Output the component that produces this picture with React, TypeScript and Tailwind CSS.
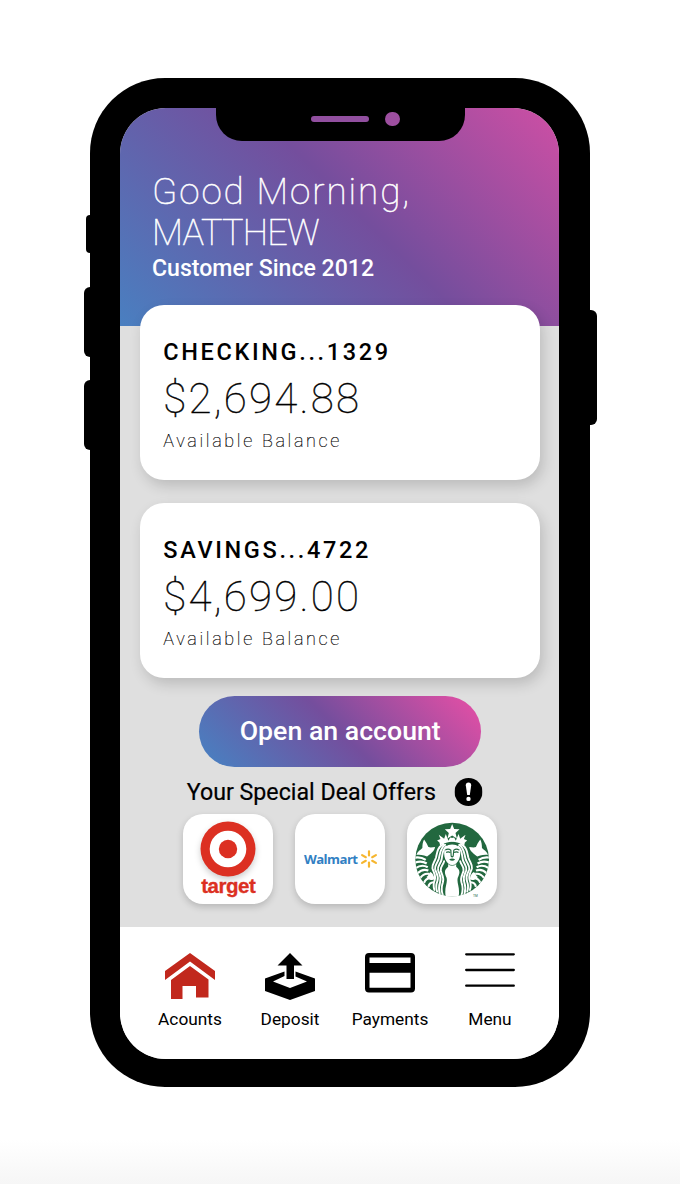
import type { ReactNode } from "react";

const half = (
  <g>
    {/* tail fin */}
    <path fill="#fff" d="M73 95 C79 103 83 110 86 118 C93 120 100 118 106 118 C104 131 92 138 82 146 C70 142 60 141 50 141 C54 131 62 127 68 121 C68 111 69 102 73 95Z" />
    {/* scales of the tail */}
    <g fill="none" stroke="#fff" strokeWidth="6.5">
      <path d="M42 150 Q62 145 78 156" />
      <path d="M44 165 Q65 157 81 167" />
      <path d="M48 181 Q66 168 84 178" />
      <path d="M54 196 Q68 181 86 188" />
      <path d="M62 210 Q72 195 88 198" />
      <path d="M73 225 Q78 210 94 211" />
      <path d="M86 237 Q88 224 102 223" />
    </g>
    <path fill="#fff" d="M92 192 C99 195 103 203 104 214 C98 219 88 216 80 207 C87 204 86 197 92 192Z" />
    {/* hair */}
    <g fill="none" stroke="#fff" strokeWidth="5.6" strokeLinecap="round">
      <path d="M131 109 C113 118 112 134 109 148 C104 164 96 170 98 181 C101 194 110 201 105 216 C100 229 100 235 104 246" />
      <path d="M136 111 C120 122 121 139 117 153 C112 168 104 173 106 184 C110 198 118 204 113 219 C108 232 107 238 112 251" />
      <path d="M139 116 C127 125 128 142 125 157 C120 171 112 175 115 187 C119 200 126 207 121 222 C116 236 116 243 120 257" />
      <path d="M133 160 C130 172 120 177 123 189 C127 202 134 208 129 224 C124 238 125 249 129 261" />
    </g>
    {/* crown points */}
    <path fill="#fff" d="M158 91 L151 89 L146 99 L138 79 L133 93 L117 81 L122 94 L112 98 L119 104 L121 113 Q139 102 158 102Z" />
  </g>
);

function Siren() {
  return (
    <svg viewBox="46 43 224 224" className="h-[75px] w-[75px]">
      <defs>
        <clipPath id="disc"><circle cx="157" cy="155" r="110" /></clipPath>
      </defs>
      <circle cx="157" cy="155" r="110" fill="#22683f" />
      <g clipPath="url(#disc)">
        {half}
        <g transform="translate(314 0) scale(-1 1)">{half}</g>
        <path fill="#fff" d="M157 110 C140 110 133 120 133 137 C133 150 138 160 145 167 L145 177 C131 188 135 197 140 209 C145 225 132 238 138 268 H176 C182 238 169 225 174 209 C179 197 183 188 169 177 L169 167 C176 160 181 150 181 137 C181 120 174 110 157 110Z" />
        <path fill="#fff" d="m157 49 6 15 16 1-12 11 4 16-14-9-14 9 4-16-12-11 16-1z" />
        <path fill="none" stroke="#22683f" strokeWidth="3.4" d="M136 127 Q145 121 153 127 L154 145 Q157 149 160 145 L162 127 Q170 121 178 127 M139 134 Q145 130 151 134 M163 134 Q170 130 176 134" />
        <path fill="#22683f" d="M148 155 Q157 149 166 155 Q157 163 148 155Z" />
        <path fill="none" stroke="#22683f" strokeWidth="2" d="M145 168 Q157 178 169 168" />
      </g>
      <text x="219" y="266" fontSize="10" fill="#22683f" fontFamily="Liberation Sans, sans-serif">TM</text>
    </svg>
  );
}

function Bullseye() {
  return (
    <svg viewBox="0 0 56 56" className="h-[56px] w-[56px] drop-shadow-[0_3px_3px_rgba(0,0,0,0.2)]">
      <circle cx="28" cy="28" r="27.5" fill="#dc3022" />
      <circle cx="28" cy="28" r="18.3" fill="#fff" />
      <circle cx="28" cy="28" r="9.2" fill="#dc3022" />
    </svg>
  );
}

function Spark() {
  return (
    <svg viewBox="-9 -9 18 18" className="h-[18px] w-[18px]">
      <g stroke="#f6b62f" strokeWidth="2.2" strokeLinecap="round">
        <path d="M0-3.6V-7.7M0 3.6V7.7M3.2-1.8 6.9-3.9M3.2 1.8 6.9 3.9M-3.2-1.8-6.9-3.9M-3.2 1.8-6.9 3.9" />
      </g>
    </svg>
  );
}

function Tile({ children }: { children: ReactNode }) {
  return (
    <div className="flex h-[90px] w-[90px] flex-col items-center justify-center overflow-hidden rounded-[20px] bg-white shadow-[0_3px_7px_rgba(0,0,0,0.18)]">
      {children}
    </div>
  );
}

function Account({ name, amount }: { name: string; amount: string }) {
  return (
    <section className="h-[175px] w-[400px] rounded-[24px] bg-white pl-[23px] pt-[31px] text-black shadow-[3px_6px_14px_rgba(0,0,0,0.16)]">
      <h2 className="whitespace-nowrap text-[23.5px] font-medium leading-[32px] tracking-[2.65px]">{name}</h2>
      <p className="mt-[8px] text-[42px] font-thin leading-[46px] tracking-[2.25px] [-webkit-text-stroke:0.4px_#000]">{amount}</p>
      <p className="mt-[7px] text-[18px] font-thin leading-[24px] tracking-[2.65px] [-webkit-text-stroke:0.2px_#000]">Available Balance</p>
    </section>
  );
}

function NavItem({ label, children }: { label: string; children: ReactNode }) {
  return (
    <a className="flex w-[100px] flex-col items-center">
      <svg viewBox="0 0 50 48" className="h-[48px] w-[50px]">{children}</svg>
      <span className="mt-[7px] text-[17.3px] leading-[22px] text-black">{label}</span>
    </a>
  );
}

export default function App() {
  return (
    <main className="flex h-[1184px] w-[680px] overflow-hidden bg-[linear-gradient(to_bottom,#fff_1140px,#f6f6f6_1184px)] pl-[89.5px] pt-[78px] font-['Roboto',sans-serif]">
      <div className="relative h-[1009px] w-[500px] rounded-[75px] bg-black pl-[30px] pr-[30.5px] pt-[30px]">
        <i className="absolute left-[-4px] top-[137px] h-[38px] w-[12px] rounded-[4px] bg-black" />
        <i className="absolute left-[-6px] top-[209px] h-[70px] w-[14px] rounded-[6px] bg-black" />
        <i className="absolute left-[-6px] top-[302px] h-[70px] w-[14px] rounded-[6px] bg-black" />
        <i className="absolute right-[-7px] top-[232px] h-[115px] w-[14px] rounded-[6px] bg-black" />
        <div className="relative flex h-[950.5px] flex-col items-center overflow-hidden rounded-[46px] bg-[#dfdfdf]">
          <div className="absolute left-[96px] top-[-1px] h-[34px] w-[249px] rounded-b-[26px] bg-black">
            <i className="absolute left-[95px] top-[9px] h-[6px] w-[58px] rounded-full bg-[#914f9f]" />
            <i className="absolute left-[169.5px] top-[4.5px] h-[14.5px] w-[14.5px] rounded-full bg-[#9d4fa0]" />
          </div>
          <header className="h-[217.5px] w-full shrink-0 bg-[linear-gradient(45deg,#4683c3_-20px,#744e9d_248px,#e44fa6_517px)] pl-[32.5px] pt-[62px] text-white">
            <p className="whitespace-nowrap text-[36.8px] font-thin leading-[44px] tracking-[1.95px] [-webkit-text-stroke:0.5px_#fff]">Good Morning,</p>
            <p className="mt-[-2px] text-[36px] font-thin leading-[42px] tracking-[-0.75px] [-webkit-text-stroke:0.5px_#fff]">MATTHEW</p>
            <p className="mt-[1px] text-[23.1px] font-medium leading-[28px]">Customer Since 2012</p>
          </header>
          <div className="mt-[-20.5px] flex translate-x-px flex-col gap-[23px]">
            <Account name="CHECKING...1329" amount="$2,694.88" />
            <Account name="SAVINGS...4722" amount="$4,699.00" />
          </div>
          <button className="mt-[17.5px] h-[71.5px] w-[282px] shrink-0 translate-x-px rounded-[36px] bg-[linear-gradient(45deg,#4683c3,#744e9d_50%,#e94fa6)] text-[26.7px] font-medium text-white">
            Open an account
          </button>
          <div className="mt-[10px] flex h-[30px] w-[306px] shrink-0 translate-x-[0.5px] items-center justify-between pr-[10px]">
            <span className="whitespace-nowrap text-[23.2px] leading-[30px] text-black [-webkit-text-stroke:0.2px_#000]">Your Special Deal Offers</span>
            <svg viewBox="0 0 28 28" className="h-[28px] w-[28px]">
              <circle cx="14" cy="14" r="14" fill="#000" />
              <path fill="#fff" d="M11.3 7.3a2.7 2.7 0 0 1 5.4 0L15.3 17h-2.6z" />
              <circle cx="14" cy="20.9" r="2.2" fill="#fff" />
            </svg>
          </div>
          <div className="mt-[7px] flex shrink-0 translate-x-px gap-[22px]">
            <Tile>
              <Bullseye />
              <span className="mb-[2px] mt-[-1px] font-['Liberation_Sans',sans-serif] text-[20.5px] font-bold leading-[20px] tracking-[-0.5px] text-[#dc3022] [-webkit-text-stroke:0.3px_#dc3022]">target</span>
            </Tile>
            <Tile>
              <div className="flex items-center gap-[2px] pl-px">
                <span className="font-['Open_Sans',sans-serif] text-[13.2px] font-bold leading-[18px] tracking-[-0.55px] text-[#3180c3]">Walmart</span>
                <Spark />
              </div>
            </Tile>
            <Tile><Siren /></Tile>
          </div>
          <nav className="mt-[23px] flex w-full flex-1 justify-center bg-white pl-[1.5px] pt-[25.5px]">
            <NavItem label="Acounts">
              <path fill="#c1281d" d="M25 0 50 18V27L25 8.5 0 27V18zM25 13 43.5 26.5V44.5H31V33H17.5V46H6V27z" />
            </NavItem>
            <NavItem label="Deposit">
              <path d="M25 0 37.5 12.5H29V26H21.5V12.5H12.5zM0 25.5 19.5 18.5V23L8 28.5 25 35 42 28.5 30.5 23.5V18.5L50 25.5V38L25 47 0 38z" />
            </NavItem>
            <NavItem label="Payments">
              <path fillRule="evenodd" d="M4 0H46a4 4 0 0 1 4 4V35.5a4 4 0 0 1-4 4H4a4 4 0 0 1-4-4V4a4 4 0 0 1 4-4zM4.5 4.5V10H45.5V4.5zM4.5 19.7V34.7H45.5V19.7z" />
            </NavItem>
            <NavItem label="Menu">
              <path stroke="#000" strokeWidth="2.3" strokeLinecap="round" d="M1.2 1.3H48.8M1.2 17H48.8M1.2 32.7H48.8" />
            </NavItem>
          </nav>
        </div>
      </div>
    </main>
  );
}
